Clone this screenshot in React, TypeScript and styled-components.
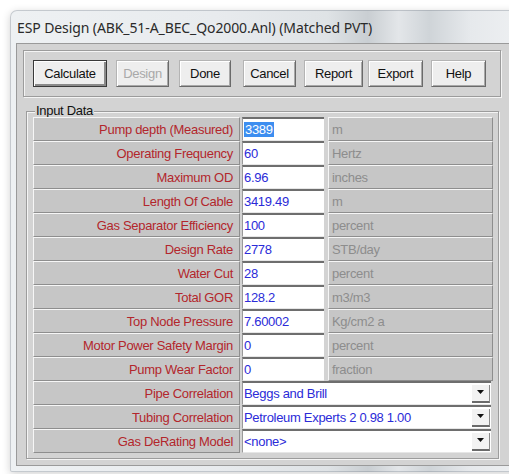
import React from "react";
import styled, { createGlobalStyle, css } from "styled-components";

const GlobalStyle = createGlobalStyle`
  html, body {
    margin: 0;
    padding: 0;
    background: #ffffff;
    overflow: hidden;
  }
  body {
    font-family: "Liberation Sans", Arial, sans-serif;
  }
`;

const Page = styled.div`
  width: 509px;
  height: 474px;
  padding: 10px 0 0 10px;
  box-sizing: border-box;
  overflow: hidden;
`;

const Window = styled.div`
  width: 512px;
  box-sizing: border-box;
  padding: 0 7px 5px 5px;
  border-radius: 7px 7px 2px 2px;
  border: 1px solid rgba(120, 130, 140, 0.35);
  background: linear-gradient(
    90deg,
    #eef1f3 0%,
    #e8ebee 40%,
    #dfe3e6 62%,
    #c9ced2 70%,
    #e3e6e9 76%,
    #cfd4d8 82%,
    #e6e9ec 90%,
    #eef0f2 100%
  );
  box-shadow: 0 2px 8px rgba(0, 0, 0, 0.18);
`;

const TitleBar = styled.div`
  height: 32px;
  display: flex;
  align-items: center;
  padding-left: 1px;
  font-family: "Noto Sans", "Open Sans", sans-serif;
  font-size: 14px;
  color: #2a2a2a;
  letter-spacing: -0.1px;
`;

const Client = styled.div`
  background: #d3d3d3;
  border: 1px solid #9a9a9a;
  padding: 6px 5px 6px 6px;
  display: flex;
  flex-direction: column;
`;

const etched = css`
  border: 1px solid #9c9c9c;
  box-shadow: inset 1px 1px 0 #f4f4f4, 1px 1px 0 #f4f4f4;
`;

const Toolbar = styled.div`
  ${etched};
  height: 47px;
  width: 478px;
  box-sizing: border-box;
  display: flex;
  align-items: center;
  padding: 0 0 1px 9px;
`;

const Button = styled.button<{ $w: number; $gap: number; $isDefault?: boolean }>`
  width: ${(p) => p.$w}px;
  margin-left: ${(p) => p.$gap}px;
  height: 27px;
  padding: 0;
  box-sizing: border-box;
  font-family: "Liberation Sans", Arial, sans-serif;
  font-size: 13px;
  letter-spacing: -0.3px;
  color: #111;
  background: #eeeeee;
  border: 1px solid #b4b4b4;
  border-right-color: #6a6a6a;
  border-bottom-color: #6a6a6a;
  box-shadow: inset 1px 1px 0 #ffffff, inset -1px -1px 0 #a8a8a8;
  ${(p) =>
    p.$isDefault &&
    css`
      border: 1px solid #3a3a3a;
      box-shadow: inset 1px 1px 0 #ffffff, inset -2px -2px 0 #8a8a8a;
    `}
  &:disabled {
    color: #a9a9a9;
  }
`;

const Group = styled.fieldset`
  ${etched};
  margin: 8px 0 0 3px;
  width: 473px;
  box-sizing: border-box;
  padding: 0 5px 5px 6px;
  min-width: 0;
`;

const Legend = styled.legend`
  font-size: 13px;
  line-height: 12px;
  letter-spacing: -0.3px;
  color: #111;
  padding: 0 1px;
  margin-left: 2px;
  background: #d3d3d3;
`;

const Row = styled.div`
  display: flex;
  height: 24px;
`;

const raisedCell = css`
  box-sizing: border-box;
  height: 24px;
  background: #c6c6c6;
  border-top: 1px solid #f6f6f6;
  border-left: 1px solid #f6f6f6;
  border-bottom: 1px solid #8e8e8e;
  border-right: 1px solid #8e8e8e;
  display: flex;
  align-items: center;
  font-size: 13px;
  letter-spacing: -0.3px;
`;

const LabelCell = styled.div`
  ${raisedCell};
  width: 207px;
  justify-content: flex-end;
  padding-right: 6px;
  color: #b3262c;
`;

const UnitCell = styled.div`
  ${raisedCell};
  width: 165px;
  margin-left: 4px;
  padding-left: 3px;
  color: #8d8d8d;
`;

const ValueCell = styled.div<{ $w: number }>`
  box-sizing: border-box;
  width: ${(p) => p.$w}px;
  height: 24px;
  margin-left: 2px;
  background: #ffffff;
  border-top: 2px solid #6e6e6e;
  border-left: 1px solid #9a9a9a;
  border-bottom: 1px solid #e6e6e6;
  display: flex;
  align-items: center;
  padding-left: 1px;
  font-size: 13px;
  letter-spacing: -0.3px;
  color: #2b2bd8;
`;

const Selected = styled.span`
  background: #3d8ef0;
  color: #ffffff;
  padding: 0 1px;
`;

const ValueText = styled.span`
  flex: 1;
  white-space: nowrap;
`;

const DropButton = styled.div`
  width: 18px;
  height: 18px;
  margin-right: 1px;
  box-sizing: border-box;
  background: #f2f2f2;
  border-bottom: 2px solid #6a6a6a;
  border-right: 1px solid #8a8a8a;
  display: flex;
  align-items: center;
  justify-content: center;
`;

type Field =
  | { label: string; value: string; unit: string; selected?: boolean }
  | { label: string; value: string; combo: true };

const fields: Field[] = [
  { label: "Pump depth (Measured)", value: "3389", unit: "m", selected: true },
  { label: "Operating Frequency", value: "60", unit: "Hertz" },
  { label: "Maximum OD", value: "6.96", unit: "inches" },
  { label: "Length Of Cable", value: "3419.49", unit: "m" },
  { label: "Gas Separator Efficiency", value: "100", unit: "percent" },
  { label: "Design Rate", value: "2778", unit: "STB/day" },
  { label: "Water Cut", value: "28", unit: "percent" },
  { label: "Total GOR", value: "128.2", unit: "m3/m3" },
  { label: "Top Node Pressure", value: "7.60002", unit: "Kg/cm2 a" },
  { label: "Motor Power Safety Margin", value: "0", unit: "percent" },
  { label: "Pump Wear Factor", value: "0", unit: "fraction" },
  { label: "Pipe Correlation", value: "Beggs and Brill", combo: true },
  { label: "Tubing Correlation", value: "Petroleum Experts 2 0.98 1.00", combo: true },
  { label: "Gas DeRating Model", value: "<none>", combo: true },
];

const buttons = [
  { text: "Calculate", w: 74, gap: 0, isDefault: true },
  { text: "Design", w: 53, gap: 9, disabled: true },
  { text: "Done", w: 52, gap: 10 },
  { text: "Cancel", w: 53, gap: 12 },
  { text: "Report", w: 59, gap: 8 },
  { text: "Export", w: 55, gap: 5 },
  { text: "Help", w: 55, gap: 8 },
];

const Arrow = () => (
  <svg width="8" height="5" viewBox="0 0 8 5">
    <path d="M0 0 H7 L3.5 4 Z" fill="#111" />
  </svg>
);

export default function App() {
  return (
    <>
      <GlobalStyle />
      <Page>
        <Window>
          <TitleBar>ESP Design (ABK_51-A_BEC_Qo2000.Anl) (Matched PVT)</TitleBar>
          <Client>
            <Toolbar>
              {buttons.map((b) => (
                <Button
                  key={b.text}
                  $w={b.w}
                  $gap={b.gap}
                  $isDefault={b.isDefault}
                  disabled={b.disabled}
                >
                  {b.text}
                </Button>
              ))}
            </Toolbar>
            <Group>
              <Legend>Input Data</Legend>
              {fields.map((f) => (
                <Row key={f.label}>
                  <LabelCell>{f.label}</LabelCell>
                  {"combo" in f ? (
                    <ValueCell $w={249}>
                      <ValueText>{f.value}</ValueText>
                      <DropButton>
                        <Arrow />
                      </DropButton>
                    </ValueCell>
                  ) : (
                    <>
                      <ValueCell $w={82}>
                        {f.selected ? <Selected>{f.value}</Selected> : <ValueText>{f.value}</ValueText>}
                      </ValueCell>
                      <UnitCell>{f.unit}</UnitCell>
                    </>
                  )}
                </Row>
              ))}
            </Group>
          </Client>
        </Window>
      </Page>
    </>
  );
}
